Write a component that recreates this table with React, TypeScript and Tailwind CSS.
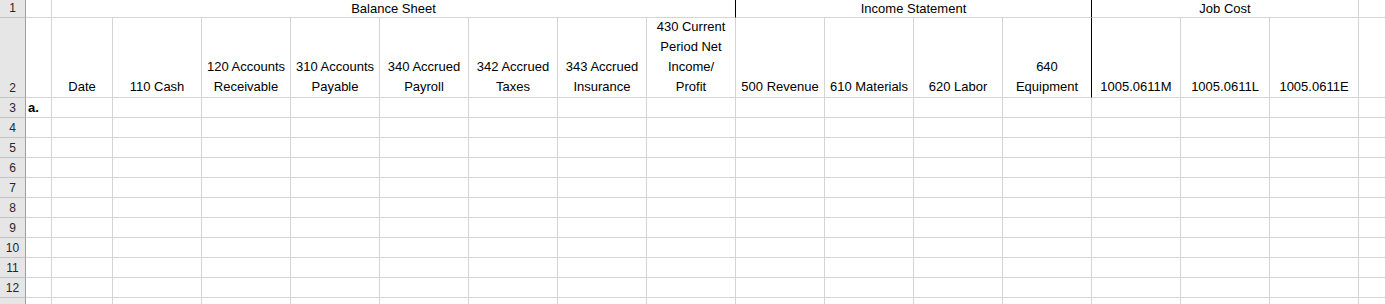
import React from "react"

type HeaderCell = { lines: string[]; black?: boolean }

const ACCOUNT_HEADERS: HeaderCell[] = [
  { lines: ["Date"] },
  { lines: ["110 Cash"] },
  { lines: ["120 Accounts", "Receivable"] },
  { lines: ["310 Accounts", "Payable"] },
  { lines: ["340 Accrued", "Payroll"] },
  { lines: ["342 Accrued", "Taxes"] },
  { lines: ["343 Accrued", "Insurance"] },
  { lines: ["430 Current", "Period Net", "Income/", "Profit"] },
  { lines: ["500 Revenue"] },
  { lines: ["610 Materials"] },
  { lines: ["620 Labor"] },
  { lines: ["640", "Equipment"], black: true },
  { lines: ["1005.0611M"] },
  { lines: ["1005.0611L"] },
  { lines: ["1005.0611E"] },
  { lines: [] },
]

// columns after the row header: A + the 16 above
const DATA_COLS = 17
const BODY_ROWS = [3, 4, 5, 6, 7, 8, 9, 10, 11, 12, 13]

function RowHeader({ n, className = "" }: { n?: number; className?: string }) {
  return (
    <div
      className={`flex items-end justify-center border-r border-b border-r-[#9e9e9e] border-b-[#c4c4c4] bg-[#e6e6e6] text-[12px] leading-[17px] text-[#262626] ${className}`}
    >
      {n}
    </div>
  )
}

export default function App() {
  return (
    <div
      className="h-[304px] w-[1385px] overflow-hidden bg-white text-[13px] text-black"
      style={{ fontFamily: '"Liberation Sans", Arial, sans-serif' }}
    >
      <div className="grid grid-cols-[26px_26px_61px_repeat(14,89px)_60px] grid-rows-[18px_80px_repeat(11,20px)]">
        {/* row 1 */}
        <RowHeader n={1} />
        <div className="border-r border-b border-[#d4d4d4]" />
        <div className="col-span-8 border-b border-r border-b-[#d4d4d4] border-r-black text-center leading-[17px]">
          Balance Sheet
        </div>
        <div className="col-span-4 border-b border-r border-b-[#d4d4d4] border-r-black text-center leading-[17px]">
          Income Statement
        </div>
        <div className="col-span-3 border-r border-b border-[#d4d4d4] text-center leading-[17px]">
          Job Cost
        </div>
        <div className="border-r border-b border-[#d4d4d4]" />

        {/* row 2 */}
        <RowHeader n={2} />
        <div className="border-r border-b border-[#d4d4d4]" />
        {ACCOUNT_HEADERS.map((h, i) => (
          <div
            key={i}
            className={`flex flex-col items-center justify-end border-r border-b border-b-[#d4d4d4] leading-[20px] ${
              h.black ? "border-r-black" : "border-r-[#d4d4d4]"
            }`}
          >
            {h.lines.map((line) => (
              <span key={line} className="whitespace-nowrap">
                {line}
              </span>
            ))}
          </div>
        ))}

        {/* body rows; row 13 sits past the bottom edge, so its number is not shown */}
        {BODY_ROWS.map((r) => (
          <React.Fragment key={r}>
            <RowHeader n={r < 13 ? r : undefined} />
            {Array.from({ length: DATA_COLS }).map((_, c) => (
              <div
                key={c}
                className="flex items-end border-r border-b border-[#d4d4d4] px-[2px] leading-[19px]"
              >
                {r === 3 && c === 0 ? <span className="font-bold">a.</span> : null}
              </div>
            ))}
          </React.Fragment>
        ))}
      </div>
    </div>
  )
}
